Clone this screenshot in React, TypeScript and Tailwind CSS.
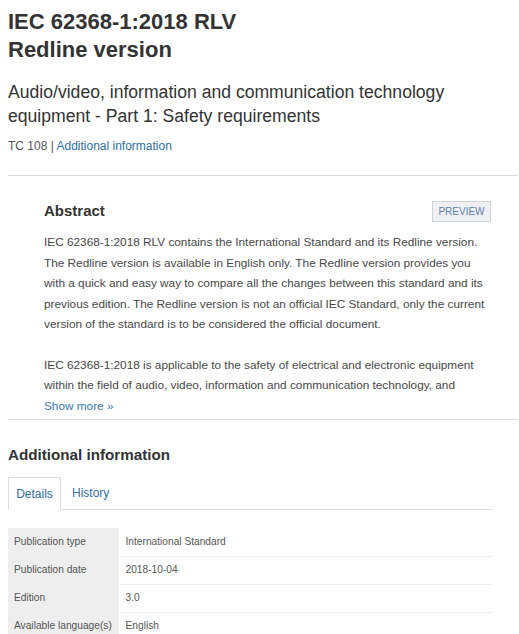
export default function App() {
  const rows = [
    ["Publication type", "International Standard"],
    ["Publication date", "2018-10-04"],
    ["Edition", "3.0"],
    ["Available language(s)", "English"],
  ];

  return (
    <div className="h-[634px] w-full overflow-hidden bg-white pl-2 pr-px font-['Liberation_Sans',Arial,sans-serif] text-[#333]">
      <h1 className="pt-2 text-[22px] font-bold leading-[28px]">
        IEC 62368-1:2018 RLV
        <br />
        Redline version
      </h1>

      <p className="mt-4 text-[17.6px] leading-[24px]">
        Audio/video, information and communication technology equipment - Part
        1: Safety requirements
      </p>

      <div className="mt-[10px] text-[12px] leading-4 text-[#555]">
        TC 108 |{" "}
        <a href="#" className="text-[#2f6fa3]">
          Additional information
        </a>
      </div>

      <hr className="mt-[21px] border-t border-[#dcdcdc]" />

      <section className="pl-9 pr-[30px]">
        <div className="-mr-[3px] mt-[25px] flex items-start justify-between">
          <h2 className="text-[15px] font-bold leading-5">Abstract</h2>
          <button className="h-[21px] w-[59px] border border-[#cfd3d8] bg-[#eef0f3] text-[10px] text-[#5b82ab]">
            PREVIEW
          </button>
        </div>

        <div className="mt-[10px] text-[11.8px] leading-[20.5px] text-[#474747]">
          <p>
            IEC 62368-1:2018 RLV contains the International Standard and its
            Redline version. The Redline version is available in English only.
            The Redline version provides you with a quick and easy way to
            compare all the changes between this standard and its previous
            edition. The Redline version is not an official IEC Standard, only
            the current version of the standard is to be considered the official
            document.
          </p>
          <p className="mt-5">
            IEC 62368-1:2018 is applicable to the safety of electrical and
            electronic equipment within the field of audio, video, information
            and communication technology, and
          </p>
          <a href="#" className="block text-[#3b78ad]">
            Show more »
          </a>
        </div>
      </section>

      <hr className="mt-[3px] border-t border-[#dcdcdc]" />

      <h2 className="mt-[25px] text-[15.2px] font-bold leading-5">
        Additional information
      </h2>

      <div className="mr-[26px]">
        <div className="mt-[12px] flex border-b border-[#dcdcdc] text-[12px]">
          <div className="-mb-px flex h-[33px] w-[53px] items-center justify-center border border-b-white border-[#dcdcdc] bg-white text-[#2f6fa3]">
            Details
          </div>
          <div className="flex h-[32px] items-center pl-[11px] text-[#2f6fa3]">
            History
          </div>
        </div>

        <table className="mt-[18px] w-full border-collapse text-[10.2px] text-[#555]">
          <tbody>
            {rows.map(([label, value]) => (
              <tr key={label} className="h-[28px] border-b border-[#ececec]">
                <td className="w-[111px] whitespace-nowrap border-r border-white bg-[#eeeeee] pl-[6px]">
                  {label}
                </td>
                <td className="pl-[6px]">{value}</td>
              </tr>
            ))}
          </tbody>
        </table>
      </div>
    </div>
  );
}
